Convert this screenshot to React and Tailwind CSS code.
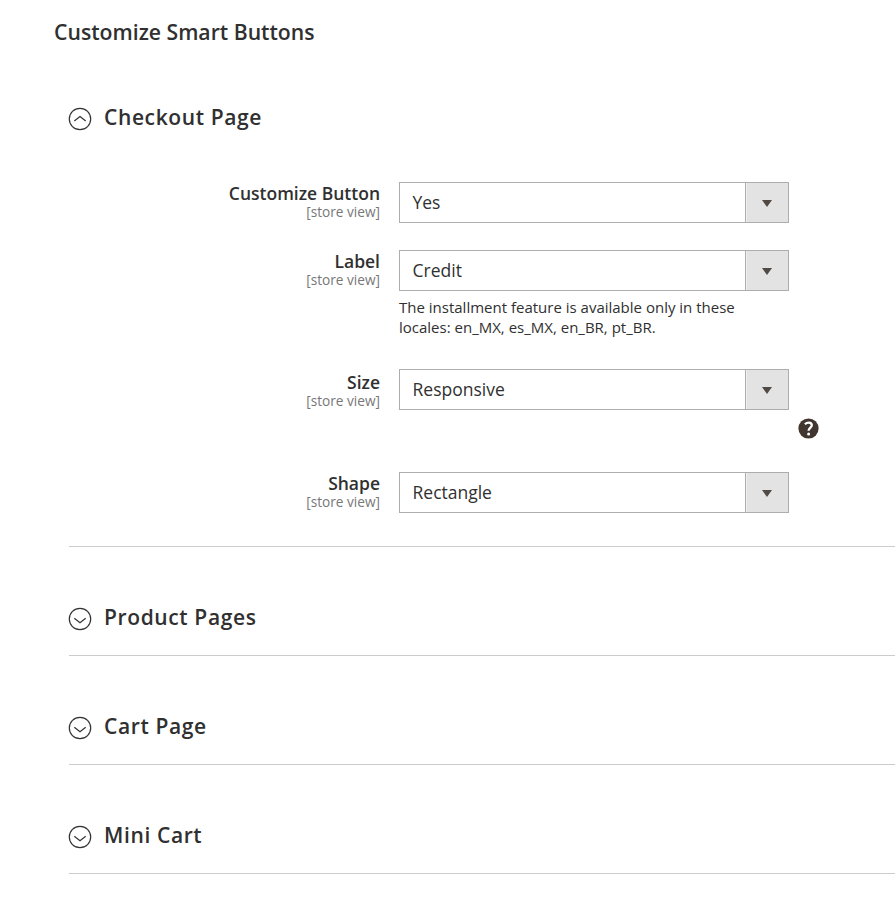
function Chevron({ open }) {
  return (
    <svg width="24" height="24" viewBox="0 0 24 24" fill="none" stroke="#333" strokeWidth="1.2" className="shrink-0">
      <circle cx="12" cy="12" r="10.7" />
      <path d={open ? "M6.3 14 L12 9.6 L17.7 14" : "M6.3 11.3 L12 15.7 L17.7 11.3"} />
    </svg>
  );
}

function Heading({ title, open }) {
  return (
    <div className="-ml-px flex h-[30px] items-start gap-[12px]">
      <div className="pt-[5px]"><Chevron open={open} /></div>
      <h3 className="text-[21px] leading-[30px] font-semibold tracking-[0.62px] whitespace-nowrap">{title}</h3>
    </div>
  );
}

function Field({ label, value, className, labelClass = "", children }) {
  return (
    <div className={"flex items-start " + className}>
      <div className={"w-[311px] shrink-0 text-right " + labelClass}>
        <div className="text-[17.5px] leading-[22px] font-semibold">{label}</div>
        <div className="text-[13.65px] leading-[16px] text-[#777]">[store view]</div>
      </div>
      <div className="ml-[19px] w-[390px] shrink-0">
        <div className="flex h-[41px] border border-[#adadad] bg-white">
          <div className="flex-1 pl-[12.5px] text-[17.5px] leading-[39px]">{value}</div>
          <div className="flex w-[43px] items-center justify-center border-l border-[#adadad] bg-[#e3e3e3] pt-[2px] shadow-[inset_1px_0_0_#f1f1f1]">
            <svg width="10" height="7" viewBox="0 0 10 7"><path d="M0 0H10L5 7Z" fill="#514943" /></svg>
          </div>
        </div>
        {children}
      </div>
    </div>
  );
}

function Section({ title }) {
  return (
    <section className="h-[109px] border-b border-[#ccc] pt-[55px]">
      <Heading title={title} />
    </section>
  );
}

export default function App() {
  return (
    <main className="h-[906px] w-[895px] overflow-hidden bg-white pt-[17px] font-['Open_Sans',sans-serif] text-[#303030]">
      <h2 className="ml-[54px] h-[30px] text-[21.2px] leading-[30px] font-semibold">Customize Smart Buttons</h2>
      <div className="ml-[69px] pt-[55px]">
        <section className="h-[445px] border-b border-[#ccc]">
          <Heading title="Checkout Page" open />
          <div className="pt-[50px]">
            <Field label="Customize Button" value="Yes" className="h-[68px]" />
            <Field label="Label" value="Credit" className="h-[119px]">
              <p className="pt-[6px] text-[15px] leading-[20px] whitespace-nowrap">The installment feature is available only in these<br />locales: en_MX, es_MX, en_BR, pt_BR.</p>
            </Field>
            <div className="flex h-[103px] items-start">
              <Field label="Size" value="Responsive" className="" labelClass="pt-[2px]" />
              <svg width="21" height="21" viewBox="0 0 21 21" className="mt-[49px] ml-[9px] shrink-0">
                <circle cx="10.5" cy="10.5" r="10.1" fill="#41362f" />
                <path d="M6.9 6.3Q8.6 4.6 10.7 4.6C12.7 4.6 13.8 5.7 13.8 7.3C13.8 9.6 10.6 9.7 10.6 12.8" fill="none" stroke="#fff" strokeWidth="2.3" />
                <circle cx="10.6" cy="15.9" r="1.5" fill="#fff" />
              </svg>
            </div>
            <Field label="Shape" value="Rectangle" className="" />
          </div>
        </section>
        <Section title="Product Pages" />
        <Section title="Cart Page" />
        <Section title="Mini Cart" />
      </div>
    </main>
  );
}
